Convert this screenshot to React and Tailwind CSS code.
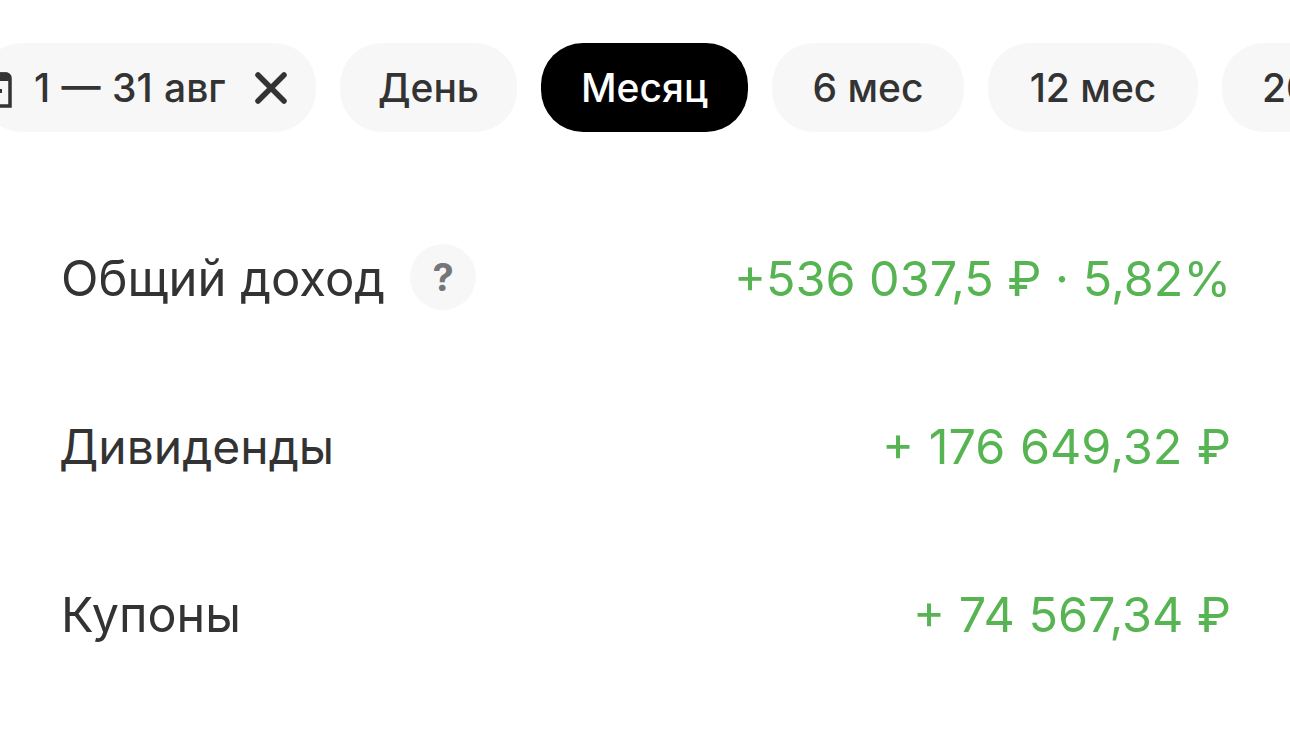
import React from "react";

function Chip({ children, active, width }) {
  return (
    <div className={`flex h-[89px] shrink-0 items-center justify-center rounded-[42px] pt-[2px] text-[39px] font-medium ${width} ${active ? "bg-black text-white" : "bg-[#f7f7f7] text-[#333333]"}`}>
      {children}
    </div>
  );
}

function Row({ label, value, extra, labelClass, valueClass }) {
  return (
    <div className="flex h-[168px] items-center justify-between">
      <div className="flex items-center gap-[25px] text-[#333333]">
        <span className={labelClass}>{label}</span>
        {extra}
      </div>
      <span className={`text-[48.5px] text-[#57b452] ${valueClass}`}>{value}</span>
    </div>
  );
}

export default function App() {
  return (
    <div className="h-[745px] w-[1290px] overflow-hidden bg-white font-['Inter',sans-serif]">
      <div className="flex gap-[24px] pt-[43px]">
        <div className="-ml-[20px] flex h-[89px] w-[336px] shrink-0 items-center rounded-[42px] bg-[#f7f7f7] text-[39px] font-medium text-[#333333]">
          <svg width="32" height="40" viewBox="0 0 32 40" className="mr-[22px] shrink-0" fill="none" stroke="#333333" strokeWidth="3.5">
            <path d="M0 6 H26 a4 4 0 0 1 4 4 V38 H0" />
            <path d="M0 4.5 H26 a4 4 0 0 1 4.25 4 V13 H0 Z" fill="#333333" stroke="none" />
            <rect x="18" y="21" width="4" height="4" fill="#333333" stroke="none" />
          </svg>
          <span className="whitespace-nowrap pt-[2px] [word-spacing:1px]">1 — 31 авг</span>
          <svg width="32" height="32" viewBox="0 0 32 32" className="ml-[29px] shrink-0" fill="none" stroke="#333333" strokeWidth="5.5" strokeLinecap="round">
            <path d="M3 3 L29 29 M29 3 L3 29" />
          </svg>
        </div>
        <Chip width="w-[177px]">День</Chip>
        <Chip active width="w-[207px]">Месяц</Chip>
        <Chip width="w-[192px]">6 мес</Chip>
        <Chip width="w-[210px]">12 мес</Chip>
        <Chip width="px-[40px]">2023</Chip>
      </div>
      <div className="mt-[63px] pr-[59px] pl-[61px]">
        <Row
          label="Общий доход"
          labelClass="text-[49px]"
          value="+536 037,5 ₽ · 5,82%"
          extra={
            <span className="flex h-[66px] w-[66px] -translate-y-[2px] items-center justify-center rounded-full bg-[#f7f7f7] text-[38px] font-bold text-[#76767a]">?</span>
          }
        />
        <Row label="Дивиденды" labelClass="-ml-[2px] text-[48px]" value="+ 176 649,32 ₽" valueClass="[word-spacing:1px]" />
        <Row label="Купоны" labelClass="text-[48.5px]" value="+ 74 567,34 ₽" />
      </div>
    </div>
  );
}
